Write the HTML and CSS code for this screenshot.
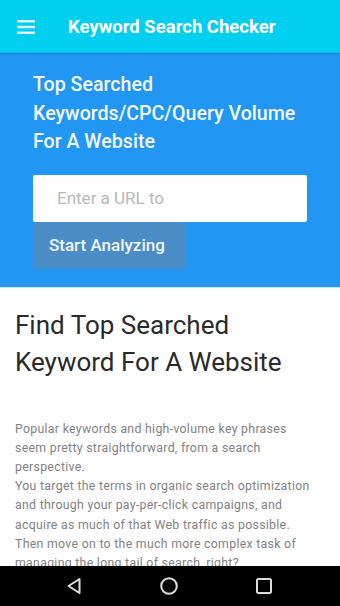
FILE: index.html
```html
<!DOCTYPE html>
<html>
<head>
<meta charset="utf-8">
<link rel="stylesheet" href="styles.css">
</head>
<body>
<header class="appbar">
  <svg class="menu" width="20" height="16" viewBox="0 0 20 16"><rect x="0" y="1" width="18" height="2.4" fill="#e8f9fd"/><rect x="0" y="6.8" width="18" height="2.4" fill="#e8f9fd"/><rect x="0" y="12.6" width="18" height="2.4" fill="#e8f9fd"/></svg>
  <h1 class="apptitle">Keyword Search Checker</h1>
</header>
<section class="hero">
  <h2 class="hero-title">Top Searched Keywords/CPC/Query Volume For A Website</h2>
  <input class="url" type="text" placeholder="Enter a URL to">
  <button class="go">Start Analyzing</button>
</section>
<main class="content">
  <h3 class="heading">Find Top Searched Keyword For A Website</h3>
  <p class="body">Popular keywords and high-volume key phrases<br>seem pretty straightforward, from a search<br>perspective.<br>You target the terms in organic search optimization<br>and through your pay-per-click campaigns, and<br>acquire as much of that Web traffic as possible.<br>Then move on to the much more complex task of<br>managing the long tail of search, right?</p>
</main>
<nav class="navbar">
  <svg width="16" height="18" viewBox="0 0 16 18"><path d="M13.5 2 L2.5 9 L13.5 16 Z" fill="none" stroke="#ddd" stroke-width="2" stroke-linejoin="round"/></svg>
  <svg width="20" height="20" viewBox="0 0 20 20"><circle cx="10" cy="10" r="7.8" fill="none" stroke="#ddd" stroke-width="2"/></svg>
  <svg width="18" height="18" viewBox="0 0 18 18"><rect x="2" y="2" width="14" height="14" rx="1.5" fill="none" stroke="#ddd" stroke-width="2"/></svg>
</nav>
</body>
</html>
```
FILE: styles.css
```css
* { box-sizing: border-box; }
html, body { margin: 0; padding: 0; }
body {
  width: 340px;
  height: 606px;
  overflow: hidden;
  font-family: Roboto, "Liberation Sans", sans-serif;
  background: #fff;
}
.appbar {
  height: 53px;
  background: #00cfef;
  display: flex;
  align-items: center;
  padding: 2px 0 0 17px;
  border-bottom: 1px solid #12b8dd;
  box-shadow: 0 1px 2px rgba(0,0,0,0.15);
  position: relative;
  z-index: 1;
}
.menu { display: block; margin-top: -1px; }
.apptitle {
  margin: 0 0 0 31px;
  font-size: 18.5px;
  font-weight: 700;
  color: #fff;
  letter-spacing: 0;
}
.hero {
  background: #2196f3;
  padding: 18px 33px 18px 33px;
  display: flex;
  flex-direction: column;
  align-items: flex-start;
  border-bottom: 1px solid #cfe3f6;
}
.hero-title {
  margin: 0;
  font-size: 19.6px;
  line-height: 28.5px;
  font-weight: 500;
  color: #f4f9ff;
  width: 274px;
}
.url {
  margin-top: 18px;
  width: 274px;
  height: 47px;
  border: 0;
  border-radius: 2px;
  padding: 0 24px;
  font-family: inherit;
  font-size: 17px;
  color: #333;
  background: #fff;
  outline: none;
}
.url::placeholder { color: #b8b8b8; }
.go {
  width: 153px;
  height: 47px;
  border: 0;
  background: #4a8cc6;
  color: #f1f6fb;
  font-family: inherit;
  font-size: 17px;
  font-weight: 500;
  text-align: left;
  padding: 0 16px;
}
.content {
  padding: 19px 15px 0 15px;
}
.heading {
  margin: 0;
  font-size: 26px;
  line-height: 37px;
  font-weight: 400;
  color: #2a2a2a;
}
.body {
  margin: 39px 0 0 0;
  font-size: 12.3px;
  line-height: 19.2px;
  letter-spacing: 0.3px;
  color: #828282;
  white-space: nowrap;
}
.navbar {
  position: fixed;
  left: 0;
  right: 0;
  bottom: 0;
  height: 40px;
  background: #000;
  display: flex;
  align-items: center;
  justify-content: space-between;
  padding: 0 67px 0 66px;
}
.navbar svg { display: block; }
```
